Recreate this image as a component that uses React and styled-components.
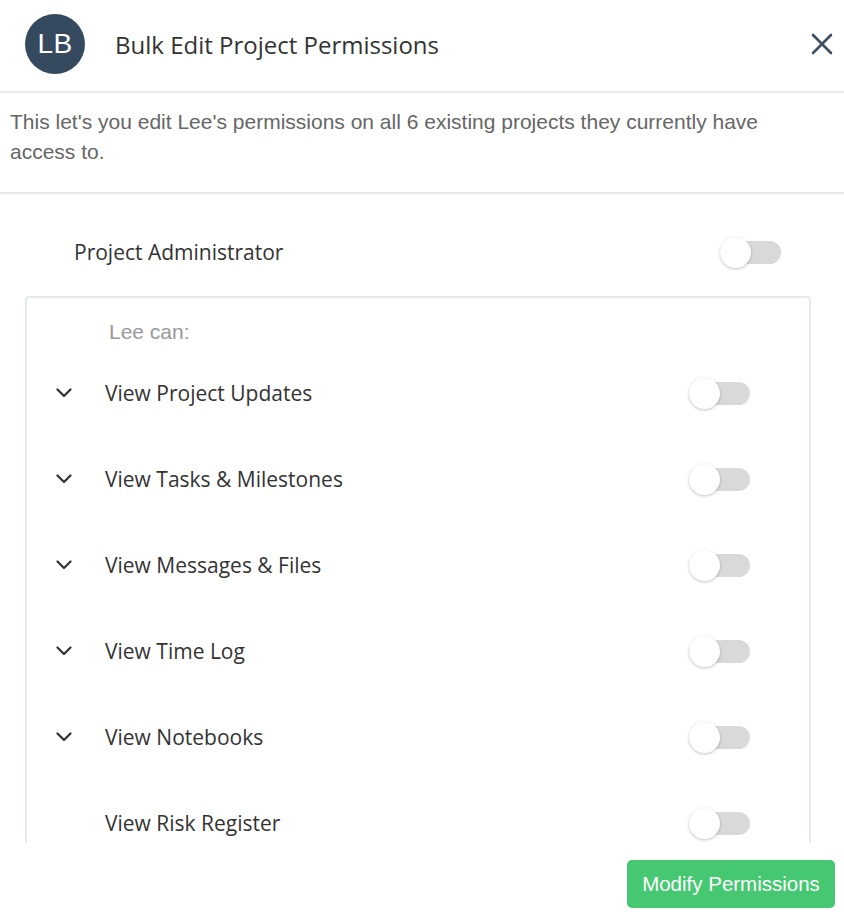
import React, { useState } from "react";
import styled, { createGlobalStyle } from "styled-components";

const GlobalStyle = createGlobalStyle`
  html, body {
    margin: 0;
    padding: 0;
    background: #ffffff;
  }
  * {
    box-sizing: border-box;
  }
`;

const permissions = [
  { key: "updates", label: "View Project Updates", expandable: true },
  { key: "tasks", label: "View Tasks & Milestones", expandable: true },
  { key: "messages", label: "View Messages & Files", expandable: true },
  { key: "time", label: "View Time Log", expandable: true },
  { key: "notebooks", label: "View Notebooks", expandable: true },
  { key: "risk", label: "View Risk Register", expandable: false },
];

const Toggle = ({ on, onClick }) => (
  <SToggle_track on={on} onClick={onClick}>
    <SToggle_knob on={on} />
  </SToggle_track>
);

const Chevron = () => (
  <svg width="16" height="10" viewBox="0 0 16 10" fill="none">
    <path d="M1.5 1.5 L8 8 L14.5 1.5" stroke="#333" strokeWidth="2.2" strokeLinecap="round" strokeLinejoin="round" />
  </svg>
);

const CloseIcon = () => (
  <svg width="22" height="22" viewBox="0 0 22 22" fill="none">
    <path d="M2 2 L20 20 M20 2 L2 20" stroke="#3d4f61" strokeWidth="2.6" strokeLinecap="round" />
  </svg>
);

const App = () => {
  const [admin, setAdmin] = useState(false);
  const [perms, setPerms] = useState({});

  const flip = (key) => {
    setPerms({ ...perms, [key]: !perms[key] });
  };

  return (
    <SModal>
      <GlobalStyle />
      <SHeader>
        <SAvatar>LB</SAvatar>
        <STitle>Bulk Edit Project Permissions</STitle>
        <SClose>
          <CloseIcon />
        </SClose>
      </SHeader>
      <SDescription>
        This let's you edit Lee's permissions on all 6 existing projects they currently have access to.
      </SDescription>
      <SBody>
        <SAdmin_row>
          <SAdmin_label>Project Administrator</SAdmin_label>
          <Toggle on={admin} onClick={() => setAdmin(!admin)} />
        </SAdmin_row>
        <SPerm_box>
          <SPerm_caption>Lee can:</SPerm_caption>
          {permissions.map((p) => (
            <SPerm_row key={p.key}>
              <SChevron_slot>{p.expandable && <Chevron />}</SChevron_slot>
              <SPerm_label>{p.label}</SPerm_label>
              <Toggle on={!!perms[p.key]} onClick={() => flip(p.key)} />
            </SPerm_row>
          ))}
        </SPerm_box>
      </SBody>
      <SFooter>
        <SSubmit>Modify Permissions</SSubmit>
      </SFooter>
    </SModal>
  );
};

const SModal = styled.div`
  width: 844px;
  height: 923px;
  display: flex;
  flex-direction: column;
  background: #fff;
`;

const SHeader = styled.div`
  height: 93px;
  flex-shrink: 0;
  display: flex;
  align-items: center;
  padding: 0 11px 3px 25px;
  border-bottom: 2px solid #e6e9ed;
`;

const SAvatar = styled.div`
  width: 60px;
  height: 60px;
  border-radius: 50%;
  background: #364a5f;
  color: #fff;
  display: flex;
  align-items: center;
  justify-content: center;
  font-family: "Liberation Sans", Arial, sans-serif;
  font-size: 28px;
  letter-spacing: 0.5px;
  flex-shrink: 0;
`;

const STitle = styled.h1`
  flex: 1;
  margin: 0 0 0 30px;
  font-family: "Open Sans", sans-serif;
  font-weight: 400;
  font-size: 24px;
  color: #333;
`;

const SClose = styled.button`
  border: none;
  background: none;
  padding: 0;
  width: 22px;
  height: 22px;
  display: flex;
  cursor: pointer;
`;

const SDescription = styled.p`
  margin: 0;
  height: 101px;
  flex-shrink: 0;
  padding: 14px 40px 0 10px;
  font-family: "Liberation Sans", Arial, sans-serif;
  font-size: 21px;
  line-height: 30px;
  color: #666;
  border-bottom: 2px solid #e6e9ed;
`;

const SBody = styled.div`
  flex: 1;
  overflow: hidden;
  padding: 34px 34px 0 25px;
`;

const SAdmin_row = styled.div`
  height: 48px;
  display: flex;
  align-items: center;
  justify-content: space-between;
  padding: 0 29px 0 49px;
  margin-bottom: 20px;
`;

const SAdmin_label = styled.span`
  font-family: "Open Sans", sans-serif;
  font-size: 21px;
  color: #333;
`;

const SPerm_box = styled.div`
  width: 786px;
  border: 2px solid #e6e9ed;
  border-radius: 4px;
  padding: 0 59px 40px 0;
`;

const SPerm_caption = styled.div`
  padding: 22px 0 0 82px;
  height: 52px;
  font-family: "Liberation Sans", Arial, sans-serif;
  font-size: 21px;
  line-height: 24px;
  color: #999;
`;

const SPerm_row = styled.div`
  height: 86px;
  display: flex;
  align-items: center;
`;

const SChevron_slot = styled.div`
  width: 78px;
  padding-left: 29px;
  display: flex;
  align-items: center;
`;

const SPerm_label = styled.span`
  flex: 1;
  font-family: "Open Sans", sans-serif;
  font-size: 21px;
  color: #333;
`;

const SToggle_track = styled.div`
  position: relative;
  width: 61px;
  height: 23px;
  border-radius: 12px;
  background: ${(props) => (props.on ? "#46c771" : "#d9d9d9")};
  cursor: pointer;
  flex-shrink: 0;
`;

const SToggle_knob = styled.div`
  position: absolute;
  top: -4px;
  left: ${(props) => (props.on ? "30px" : "0")};
  width: 31px;
  height: 31px;
  border-radius: 50%;
  background: #fff;
  box-shadow: 0 1px 3px rgba(0, 0, 0, 0.25);
`;

const SFooter = styled.div`
  height: 80px;
  flex-shrink: 0;
  display: flex;
  justify-content: flex-end;
  align-items: flex-start;
  padding: 17px 9px 0 0;
`;

const SSubmit = styled.button`
  width: 208px;
  height: 48px;
  border: none;
  border-radius: 5px;
  background: #46c771;
  color: #fff;
  font-family: "Liberation Sans", Arial, sans-serif;
  font-size: 20.5px;
  cursor: pointer;
`;

export default App;
